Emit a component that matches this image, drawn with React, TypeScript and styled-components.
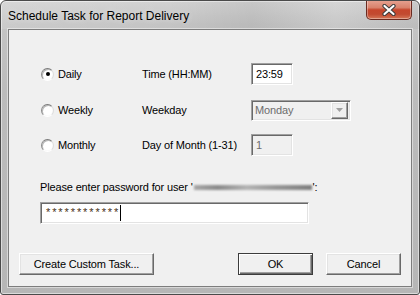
import React from "react";
import styled, { createGlobalStyle } from "styled-components";

const GlobalStyle = createGlobalStyle`
  html, body { margin: 0; padding: 0; background: #ffffff; }
  body {
    width: 420px; height: 295px; overflow: hidden;
    font-family: "Liberation Sans", Arial, sans-serif;
    font-size: 11px; color: #000;
  }
  *, *::before, *::after { box-sizing: border-box; }
`;

const Window = styled.div`
  width: 420px;
  height: 295px;
  display: flex;
  flex-direction: column;
  border: 1px solid #4a4a4a;
  border-radius: 6px 6px 3px 3px;
  background: linear-gradient(180deg, #d2d2d2 0%, #c4c4c4 8%, #bcbcbc 30%, #b6b6b6 100%);
  box-shadow: inset 0 0 0 1px rgba(255, 255, 255, 0.5);
  overflow: hidden;
`;

const TitleBar = styled.div`
  height: 28px;
  display: flex;
  align-items: flex-start;
  padding-left: 7px;
  padding-right: 7px;
  background: linear-gradient(90deg, rgba(255,255,255,0.12) 0%, rgba(0,0,0,0) 40%, rgba(0,0,0,0.05) 60%, rgba(255,255,255,0.08) 80%, rgba(0,0,0,0.04) 100%);
`;

const Title = styled.div`
  font-size: 12px;
  line-height: 14px;
  padding-top: 8px;
  color: #000;
  text-shadow: 0 0 6px rgba(255, 255, 255, 0.55);
`;

const CloseButton = styled.div`
  margin-left: auto;
  margin-top: -1px;
  width: 46px;
  height: 20px;
  display: flex;
  align-items: center;
  justify-content: center;
  border: 1px solid #6a2a20;
  border-top: none;
  border-radius: 0 0 5px 5px;
  background: linear-gradient(180deg, #e7a493 0%, #d9826c 40%, #c6462c 52%, #c24a30 75%, #d57758 100%);
  box-shadow: inset 0 0 0 1px rgba(255, 255, 255, 0.35);
`;

const Client = styled.div`
  flex: 1;
  margin: 0 7px 7px 7px;
  border: 1px solid #7d7d7d;
  background: #f0f0f0;
  display: flex;
  flex-direction: column;
  padding: 33px 10px 11px 10px;
  box-shadow: 0 0 0 1px rgba(255, 255, 255, 0.45);
  letter-spacing: -0.15px;
`;

const OptionRow = styled.div<{ $top: number }>`
  display: grid;
  grid-template-columns: 101px 109px auto;
  align-items: center;
  height: 22px;
  margin-left: 22px;
  margin-top: ${(p) => p.$top}px;
`;

const RadioLabel = styled.label`
  display: flex;
  align-items: center;
  gap: 4px;
  line-height: 14px;
`;

const RadioCircle = styled.span<{ $checked?: boolean }>`
  position: relative;
  width: 13px;
  height: 13px;
  border-radius: 50%;
  border: 1px solid;
  border-color: #7b7b7b #dcdcdc #ffffff #8a8a8a;
  background: radial-gradient(circle at 50% 50%, #ffffff 55%, #ececec 100%);
  box-shadow: inset 1px 1px 0 #b9b9b9;
  &::after {
    content: "";
    display: ${(p) => (p.$checked ? "block" : "none")};
    position: absolute;
    left: 3.5px;
    top: 3.5px;
    width: 4px;
    height: 4px;
    border-radius: 50%;
    background: #000;
  }
`;

const FieldLabel = styled.span`
  line-height: 14px;
`;

const TextBox = styled.div<{ $width: number; $disabled?: boolean }>`
  width: ${(p) => p.$width}px;
  height: 22px;
  display: flex;
  align-items: center;
  padding-left: 4px;
  border: 1px solid;
  border-color: #a0a0a0 #ffffff #ffffff #a0a0a0;
  box-shadow: inset 1px 1px 0 #696969, inset -1px -1px 0 #e3e3e3;
  background: ${(p) => (p.$disabled ? "#f0f0f0" : "#ffffff")};
  color: ${(p) => (p.$disabled ? "#6d6d6d" : "#000")};
  line-height: 14px;
`;

const SelectBox = styled.div`
  width: 100px;
  height: 21px;
  display: flex;
  align-items: center;
  padding-left: 3px;
  padding-right: 2px;
  border: 1px solid;
  border-color: #a0a0a0 #ffffff #ffffff #a0a0a0;
  box-shadow: inset 1px 1px 0 #696969, inset -1px -1px 0 #e3e3e3;
  background: #f0f0f0;
  color: #6d6d6d;
  line-height: 14px;
`;

const SelectText = styled.span`
  flex: 1;
`;

const DropButton = styled.span`
  width: 17px;
  height: 17px;
  display: flex;
  align-items: center;
  justify-content: center;
  border: 1px solid;
  border-color: #ffffff #696969 #696969 #ffffff;
  box-shadow: inset -1px -1px 0 #a0a0a0, inset 1px 1px 0 #e3e3e3;
  background: #f0f0f0;
`;

const PasswordLabel = styled.div`
  margin-top: 24px;
  margin-left: 21px;
  line-height: 14px;
  display: flex;
  align-items: center;
  white-space: nowrap;
`;

const Redacted = styled.span`
  display: inline-block;
  width: 118px;
  height: 5px;
  margin: 0 1px;
  background: linear-gradient(90deg, #a8a8a8 0%, #8a8a8a 20%, #b4b4b4 45%, #969696 70%, #7e7e7e 100%);
  filter: blur(1px);
`;

const PasswordBox = styled(TextBox)`
  margin-top: 8px;
  margin-left: 21px;
  padding-left: 5px;
`;

const Stars = styled.span`
  color: #4a3220;
  letter-spacing: 1.9px;
  margin-top: -3px;
`;

const Caret = styled.span`
  width: 1px;
  height: 16px;
  background: #000;
`;

const ButtonRow = styled.div`
  margin-top: auto;
  display: flex;
  align-items: center;
`;

const Button = styled.div<{ $width: number; $default?: boolean }>`
  width: ${(p) => p.$width}px;
  height: 22px;
  display: flex;
  align-items: center;
  justify-content: center;
  line-height: 14px;
  background: #f0f0f0;
  border: 1px solid;
  border-color: ${(p) =>
    p.$default ? "#3c3c3c" : "#ffffff #696969 #696969 #ffffff"};
  box-shadow: ${(p) =>
    p.$default
      ? "inset 1px 1px 0 #ffffff, inset -1px -1px 0 #696969, inset -2px -2px 0 #a0a0a0"
      : "inset -1px -1px 0 #a0a0a0, inset 1px 1px 0 #e3e3e3"};
`;

const Spacer = styled.div`
  flex: 1;
`;

const ButtonGap = styled.div`
  width: 13px;
`;

export default function App() {
  return (
    <>
      <GlobalStyle />
      <Window>
        <TitleBar>
          <Title>Schedule Task for Report Delivery</Title>
          <CloseButton>
            <svg width="14" height="12" viewBox="0 0 14 12">
              <path d="M2.5 2 L11.5 10 M11.5 2 L2.5 10" stroke="#3b3b3b" strokeWidth="4.2" strokeLinecap="round" />
              <path d="M2.5 2 L11.5 10 M11.5 2 L2.5 10" stroke="#ffffff" strokeWidth="2.2" strokeLinecap="round" />
            </svg>
          </CloseButton>
        </TitleBar>
        <Client>
          <OptionRow $top={0}>
            <RadioLabel>
              <RadioCircle $checked />
              Daily
            </RadioLabel>
            <FieldLabel>Time (HH:MM)</FieldLabel>
            <TextBox $width={42}>23:59</TextBox>
          </OptionRow>
          <OptionRow $top={14}>
            <RadioLabel>
              <RadioCircle />
              Weekly
            </RadioLabel>
            <FieldLabel>Weekday</FieldLabel>
            <SelectBox>
              <SelectText>Monday</SelectText>
              <DropButton>
                <svg width="7" height="4" viewBox="0 0 7 4">
                  <path d="M0 0 H7 L3.5 4 Z" fill="#a0a0a0" />
                </svg>
              </DropButton>
            </SelectBox>
          </OptionRow>
          <OptionRow $top={13}>
            <RadioLabel>
              <RadioCircle />
              Monthly
            </RadioLabel>
            <FieldLabel>Day of Month (1-31)</FieldLabel>
            <TextBox $width={42} $disabled>
              1
            </TextBox>
          </OptionRow>
          <PasswordLabel>
            Please enter password for user '<Redacted />':
          </PasswordLabel>
          <PasswordBox $width={269}>
            <Stars>************</Stars>
            <Caret />
          </PasswordBox>
          <ButtonRow>
            <Button $width={135}>Create Custom Task...</Button>
            <Spacer />
            <Button $width={75} $default>
              OK
            </Button>
            <ButtonGap />
            <Button $width={75}>Cancel</Button>
          </ButtonRow>
        </Client>
      </Window>
    </>
  );
}
